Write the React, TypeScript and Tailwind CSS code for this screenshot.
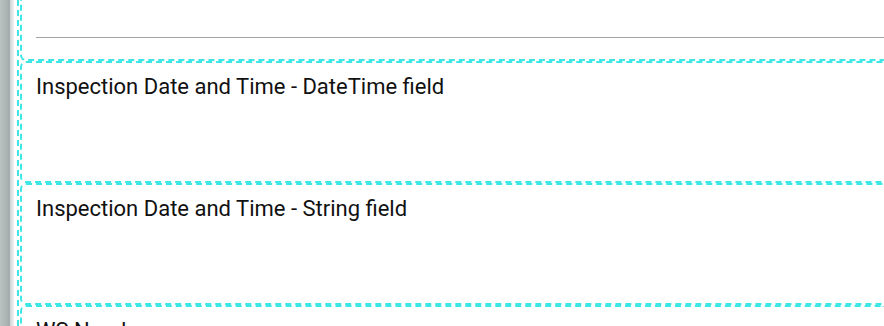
import React from "react";

// One form block: dashed cyan frame on left/top/bottom with rounded left corners.
function Section({ label, height }: { label: string; height: number }) {
  return (
    <div
      className="rounded-l-[6px] border-y-2 border-l-2 border-dashed border-[#3ee6e6] pl-[14px] pt-[7px]"
      style={{ height }}
    >
      <p className="whitespace-nowrap text-[22px] leading-[33px] text-[#111111]">{label}</p>
    </div>
  );
}

export default function App() {
  return (
    <div className="flex h-[326px] w-[884px] overflow-hidden bg-white font-['Roboto',sans-serif]">
      {/* side shadow strip */}
      <div className="w-[10px] shrink-0 bg-linear-to-r from-[#bcc2c2] to-[#a4abab]" />
      <div className="w-[4px] shrink-0 bg-linear-to-r from-[#cfd3d3] to-[#f2f3f3]" />

      <div className="ml-[3px] flex-1 border-l-2 border-dashed border-[#3ee6e6] pl-[1px]">
        <div className="-mt-[10px] flex flex-col">
          {/* previous block, only its bottom visible */}
          <div className="h-[71px] rounded-bl-[6px] border-b-2 border-l-2 border-dashed border-[#3ee6e6] pl-[14px]">
            <div className="mt-[47px] h-px bg-[#a3a3a3]" />
          </div>
          <Section label="Inspection Date and Time - DateTime field" height={122} />
          <Section label="Inspection Date and Time - String field" height={122} />
          <Section label="WS Number" height={60} />
        </div>
      </div>
    </div>
  );
}
